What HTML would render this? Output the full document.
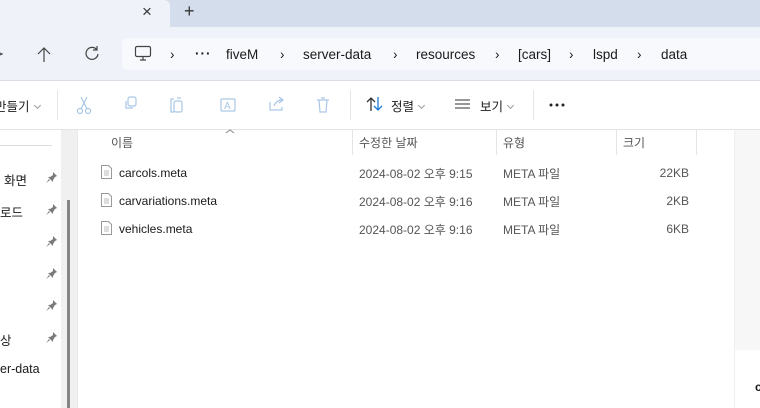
<!DOCTYPE html>
<html><head><meta charset="utf-8"><style>
*{margin:0;padding:0;box-sizing:border-box}
body{width:760px;height:408px;overflow:hidden;background:#fff;font-family:"Liberation Sans","Noto Sans CJK KR",sans-serif;font-size:12px;color:#1a1a1a;position:relative}
.a{position:absolute}
.t{position:absolute;white-space:nowrap}
.c{display:inline-block;width:5px;height:5px;border-right:1px solid #999;border-bottom:1px solid #999;transform:rotate(45deg);margin-left:5px;position:relative;top:-3px}
</style></head><body>
<div class="a" style="left:0;top:0;width:760px;height:27px;background:#d3ddeb"></div>
<div class="a" style="left:0;top:0;width:170px;height:28px;background:#eff3f9;border-top-right-radius:6px"></div>
<div class="t" style="left:142px;top:2px;font-size:17px;color:#333">×</div>
<div class="t" style="left:184px;top:1px;font-size:18px;color:#333">+</div>
<div class="a" style="left:0;top:27px;width:760px;height:54px;background:#eff3f9;border-bottom:1px solid #d9dde4"></div>
<svg class="a" style="left:0;top:27px" width="120" height="54"><g fill="none" stroke="#444" stroke-width="1.2"><path d="M44 21v14M38 27l6-6 6 6"/><path d="M97 23a6 6 0 1 0 1 4M97 19v4h-4"/><path d="M0 26l2 1-2 1"/></g></svg>
<div class="a" style="left:122px;top:38px;width:640px;height:32px;background:#f8f9fc;border-radius:5px"></div>
<svg class="a" style="left:134px;top:44px" width="20" height="20"><rect x="1.5" y="2.5" width="15" height="10" rx="1.5" fill="none" stroke="#444" stroke-width="1.2"/><path d="M6 16h6M9 13v3" stroke="#444" stroke-width="1.2"/></svg>
<div class="a" style="top:47px;left:0;font-size:13.5px;color:#1a1a1a">
<span class="t" style="left:170px;top:0">›</span><span class="t" style="left:195px;top:-1px;letter-spacing:1px;font-weight:bold">···</span><span class="t" style="left:226px">fiveM</span><span class="t" style="left:280px">›</span><span class="t" style="left:303px">server-data</span><span class="t" style="left:393px">›</span><span class="t" style="left:416px">resources</span><span class="t" style="left:495px">›</span><span class="t" style="left:518px">[cars]</span><span class="t" style="left:569px">›</span><span class="t" style="left:593px">lspd</span><span class="t" style="left:637px">›</span><span class="t" style="left:661px">data</span></div>
<div class="a" style="left:0;top:129px;width:760px;height:1px;background:#e3e3e3"></div>
<div class="t" style="left:-5px;top:96px;font-size:12.5px">만들기<span class="c"></span></div>
<div class="a" style="left:57px;top:90px;width:1px;height:30px;background:#e5e5e5"></div>
<div class="a" style="left:350px;top:90px;width:1px;height:30px;background:#e5e5e5"></div>
<div class="a" style="left:533px;top:90px;width:1px;height:30px;background:#e5e5e5"></div>
<svg class="a" style="left:70px;top:92px" width="280" height="26" fill="none" stroke="#a9c6e6" stroke-width="1.2">
<circle cx="10" cy="19" r="2.5"/><circle cx="18" cy="19" r="2.5"/><path d="M11 17L17 5M17 17L11 5"/>
<rect x="58" y="5" width="8" height="9" rx="2"/><path d="M56 9v7h7"/>
<rect x="104" y="9" width="8" height="11" rx="2"/><path d="M104 7h-3v13h3M107 6h4"/>
<rect x="151" y="7" width="14" height="12" rx="1"/><text x="154" y="17" font-size="10" fill="#a9c6e6" stroke="none">A</text>
<path d="M200 10v8h12v-3M204 14c2-5 5-6 8-6M209 5l4 3-4 3"/>
<path d="M247 8h12M249 8l1 12h6l1-12M251 6h4"/></svg>
<svg class="a" style="left:366px;top:96px" width="18" height="16" fill="none" stroke-width="1.3"><path d="M5 15V2M1 6l4-4 4 4" stroke="#333"/><path d="M12 1v13M8 10l4 4 4-4" stroke="#1b7ad8"/></svg>
<div class="t" style="left:391px;top:96px;font-size:12.5px">정렬<span class="c"></span></div>
<svg class="a" style="left:455px;top:99px" width="16" height="10" stroke="#333" stroke-width="1.1"><path d="M0 1h15M0 5h15M0 9h15"/></svg>
<div class="t" style="left:480px;top:96px;font-size:12.5px">보기<span class="c"></span></div>
<svg class="a" style="left:549px;top:103px" width="20" height="4" fill="#222"><circle cx="2" cy="2" r="1.5"/><circle cx="8" cy="2" r="1.5"/><circle cx="14" cy="2" r="1.5"/></svg>
<!-- sidebar -->
<div class="a" style="left:0;top:145px;width:52px;height:1px;background:#ddd"></div>
<div class="a" style="left:61px;top:130px;width:16px;height:278px;background:#f0f0f0"></div>
<div class="a" style="left:67px;top:200px;width:3px;height:208px;background:#858585"></div>
<div class="a" style="left:77px;top:130px;width:1px;height:278px;background:#eaeaea"></div>
<div class="t" style="left:4px;top:170px;font-size:12.5px">화면</div>
<div class="t" style="left:0;top:202px;font-size:12.5px">로드</div>
<div class="t" style="left:0;top:330px;font-size:12.5px">상</div>
<div class="t" style="left:0;top:362px;font-size:12.5px">er-data</div>
<svg class="a" style="left:45px;top:170px" width="14" height="180" fill="#7a7a7a">
<g id="p"><path d="M8 2l4 4-2 1-2 3 0 2-5-5 2 0 3-2z M4 9l-3 4 4-3z"/></g>
<use href="#p" y="32"/><use href="#p" y="64"/><use href="#p" y="96"/><use href="#p" y="128"/><use href="#p" y="160"/></svg>
<!-- headers -->
<svg class="a" style="left:225px;top:129px" width="10" height="5" fill="none" stroke="#888"><path d="M1 4l4-3 4 3"/></svg>
<div class="a" style="top:134px;left:0;color:#555;font-size:12px">
<span class="t" style="left:111px">이름</span><span class="t" style="left:359px">수정한 날짜</span><span class="t" style="left:503px">유형</span><span class="t" style="left:623px">크기</span></div>
<div class="a" style="left:352px;top:130px;width:1px;height:25px;background:#e5e5e5"></div>
<div class="a" style="left:496px;top:130px;width:1px;height:25px;background:#e5e5e5"></div>
<div class="a" style="left:616px;top:130px;width:1px;height:25px;background:#e5e5e5"></div>
<div class="a" style="left:696px;top:130px;width:1px;height:25px;background:#e5e5e5"></div>
<div class="a" style="left:735px;top:130px;width:25px;height:220px;background:#f7f7f7"></div>
<div class="a" style="left:734px;top:130px;width:1px;height:278px;background:#f0f0f0"></div>
<div class="t" style="left:755px;top:380px;font-size:12px;font-weight:bold">c</div>
<svg class="a" style="left:100px;top:165px" width="14" height="80" fill="none" stroke="#999" stroke-width="1"><g id="f"><path d="M1.5 .5h7l3 3v10h-10z"/><path d="M4 6h5M4 8h5M4 10h5" stroke="#bbb"/></g><use href="#f" y="28"/><use href="#f" y="56"/></svg>
<div class="a" style="top:166px;left:0;font-size:12px">
<span class="t" style="left:119px">carcols.meta</span><span class="t" style="left:119px;top:28px">carvariations.meta</span><span class="t" style="left:119px;top:56px">vehicles.meta</span>
<span class="t" style="left:359px;top:-1px;color:#555">2024-08-02 오후 9:15</span><span class="t" style="left:359px;top:27px;color:#555">2024-08-02 오후 9:16</span><span class="t" style="left:359px;top:55px;color:#555">2024-08-02 오후 9:16</span>
<span class="t" style="left:503px;top:-1px;color:#555">META 파일</span><span class="t" style="left:503px;top:27px;color:#555">META 파일</span><span class="t" style="left:503px;top:55px;color:#555">META 파일</span>
<span class="t" style="right:-689px;color:#555">22KB</span><span class="t" style="right:-689px;top:28px;color:#555">2KB</span><span class="t" style="right:-689px;top:56px;color:#555">6KB</span></div>
</body></html>
